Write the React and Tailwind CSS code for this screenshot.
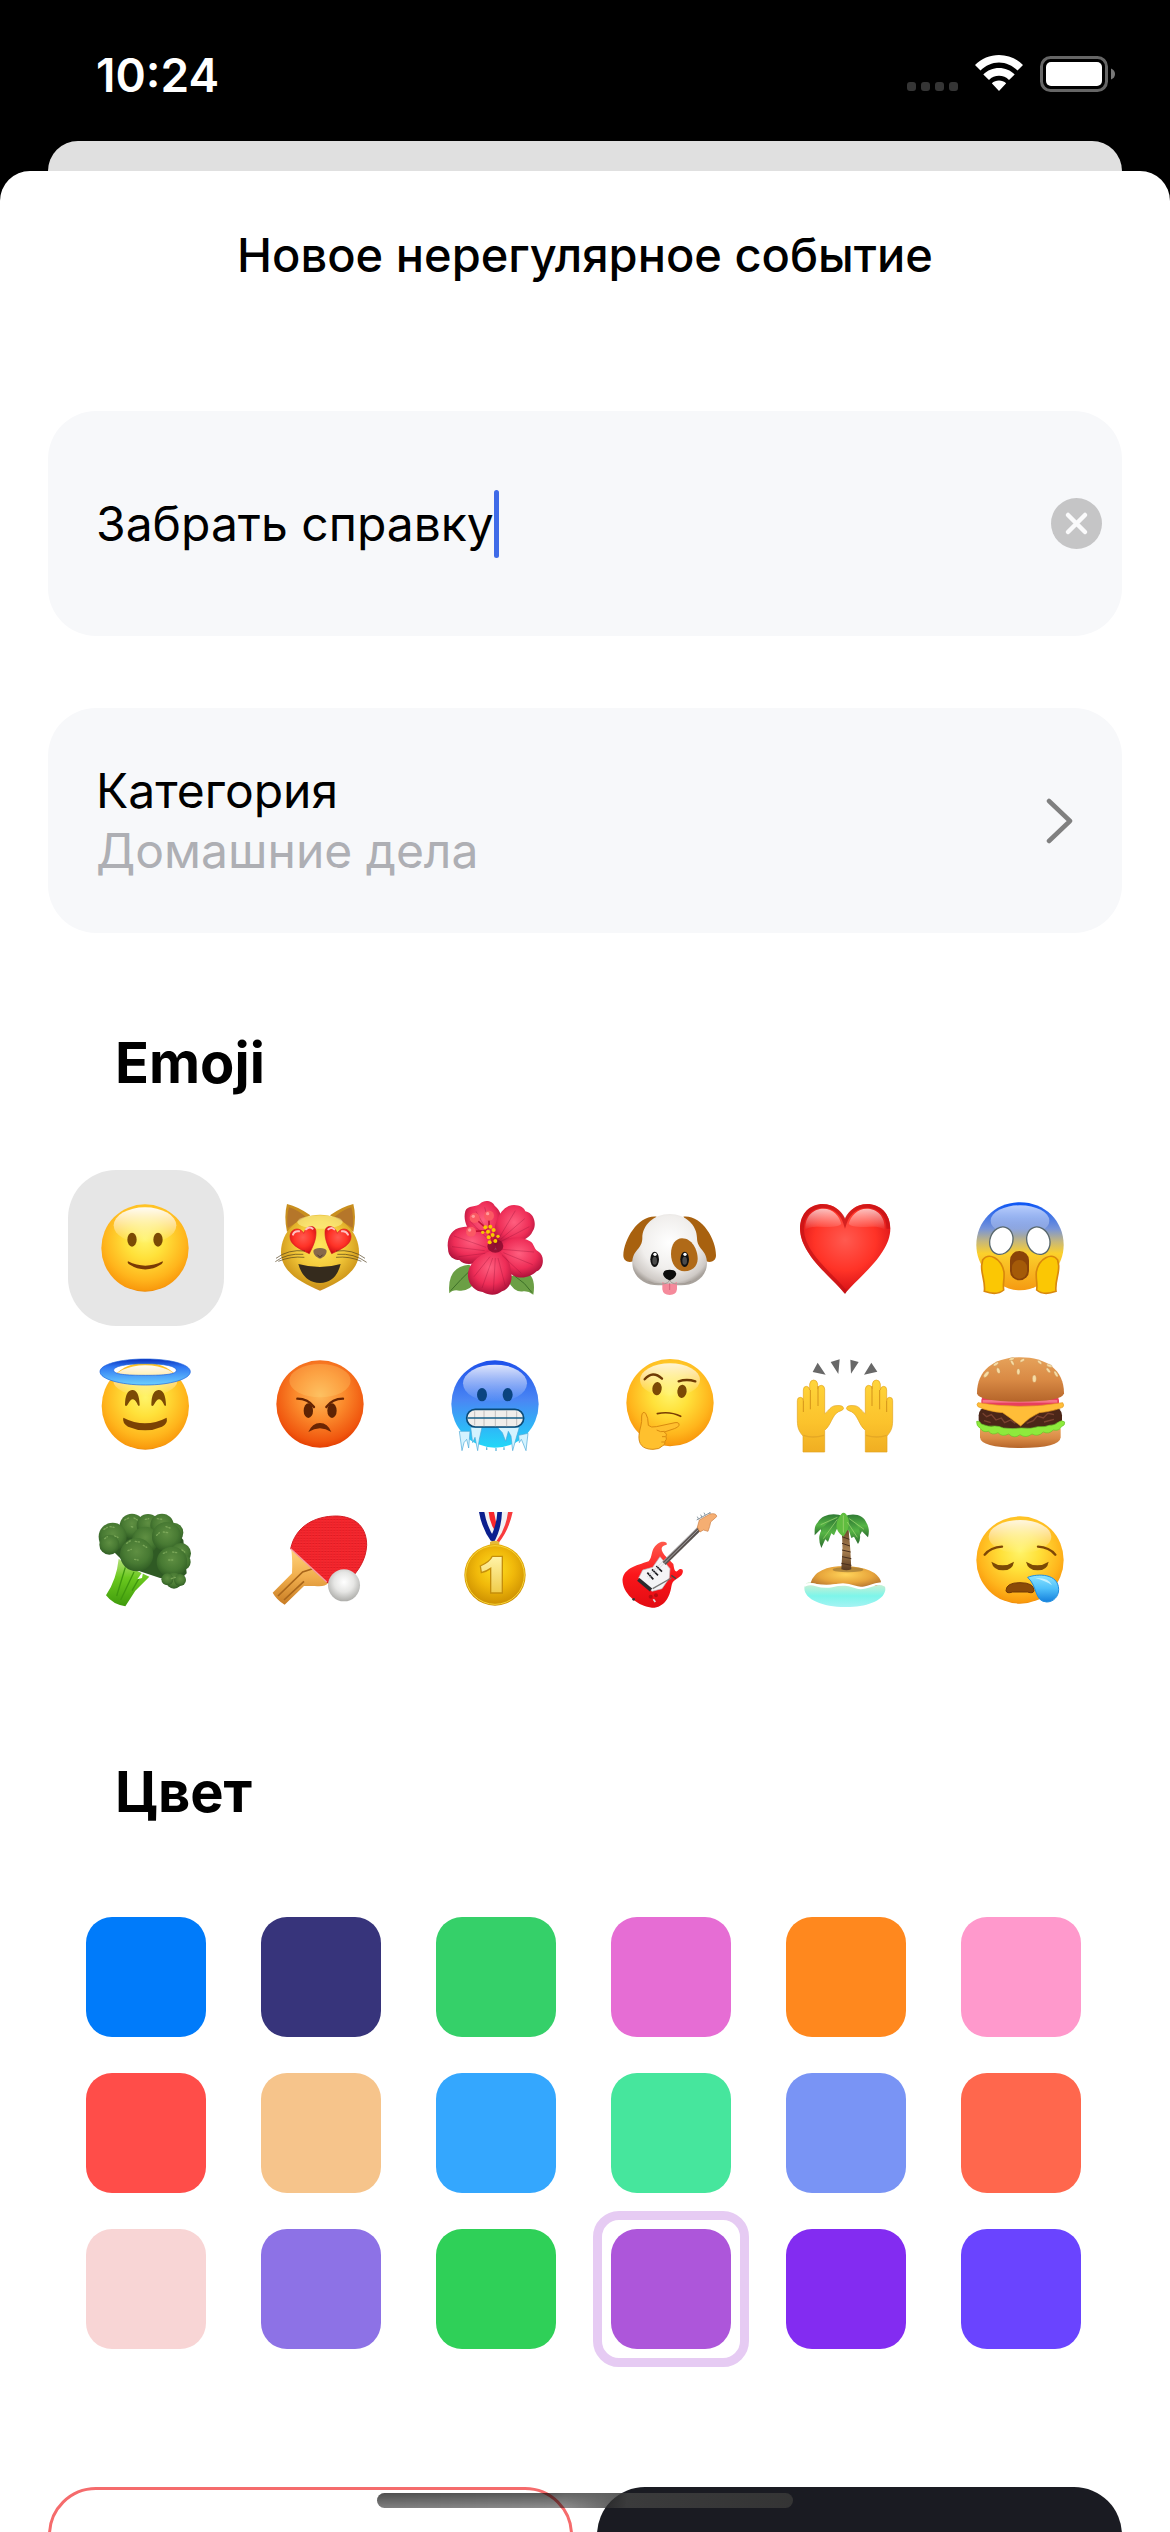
import React, { useState } from "react";

/* Gradients shared by all the emoji drawings. */
function EmojiPaints() {
  const radial = {
    face: [["0", "#fff46a"], ["0.35", "#ffe13a"], ["0.75", "#ffb51c"], ["0.94", "#f99a0d"], ["1", "#d97706"]],
    angry: [["0", "#fdb95a"], ["0.45", "#fb8a2c"], ["0.85", "#f0560e"], ["1", "#e23a00"]],
    cat: [["0", "#ffe75c"], ["0.5", "#f3c93a"], ["0.85", "#d19a1c"], ["1", "#c98a2a"]],
    heart: [["0", "#ff5a50"], ["0.55", "#ff3327"], ["0.85", "#e0191a"], ["1", "#b00a0e"]],
    dog: [["0", "#ffffff"], ["0.6", "#f0eeec"], ["0.9", "#cfcac6"], ["1", "#a8a29c"]],
    ball: [["0", "#ffffff"], ["0.5", "#e6e6e4"], ["1", "#a9a9a6"]],
    petal: [["0", "#ff5f7f"], ["0.6", "#ee2d57"], ["1", "#a80f38"]],
    leaf: [["0", "#5f8f42"], ["0.6", "#487a33"], ["1", "#2f5c23"]],
    gold: [["0", "#ffdf20"], ["0.5", "#f0b80a"], ["1", "#c88a00"]],
    sand: [["0", "#ffd45a"], ["0.6", "#e8a63c"], ["1", "#b87830"]],
  };
  const linear = {
    gloss: [["0", "#ffffff", 0.95], ["1", "#ffffff", 0]],
    halo: [["0", "#0a2fb8"], ["0.3", "#2f77f2"], ["1", "#6cd0ff"]],
    cold: [["0", "#1d50ea"], ["0.45", "#4a86f4"], ["0.75", "#2fb4f7"], ["1", "#22d8f8"]],
    scream: [["0", "#0a54f5"], ["0.3", "#7794d8"], ["0.45", "#c8b878"], ["0.58", "#fbd02c"], ["1", "#f59a12"]],
    hand: [["0", "#ffd53a"], ["0.6", "#fbc22c"], ["1", "#f0ae22"]],
    bun: [["0", "#e6a25a"], ["0.5", "#d98a45"], ["1", "#b5652a"]],
    drop: [["0", "#8ce4ff"], ["0.5", "#4fc0fa"], ["1", "#1580dc"]],
    stalk: [["0", "#b5e07a"], ["0.4", "#6ac81e"], ["1", "#3f9a0c"]],
    sea: [["0", "#d8efcf"], ["0.55", "#7df5ea"], ["1", "#a5f3f3"]],
    trunk: [["0", "#6e4a2c"], ["0.5", "#a98050"], ["1", "#5a3a20"]],
    wood: [["0", "#ffd27a"], ["0.5", "#f0ad4c"], ["1", "#c87c24"]],
    frond: [["0", "#2f7a34"], ["0.5", "#56b545"], ["1", "#2b6b2e"]],
    one: [["0", "#fff3a8"], ["1", "#f0cc4a"]],
    guitar: [["0", "#ff5a4c"], ["0.5", "#fb161b"], ["1", "#e20c12"]],
  };
  return (
    <svg className="absolute size-0" aria-hidden="true">
      <defs>
        {Object.entries(radial).map(([id, stops]) => (
          <radialGradient key={id} id={id} cx="0.5" cy="0.4" r="0.62">
            {stops.map(([o, c]) => <stop key={o} offset={o} stopColor={c} />)}
          </radialGradient>
        ))}
        {Object.entries(linear).map(([id, stops]) => (
          <linearGradient key={id} id={id} x1="0" y1="0" x2="0" y2="1">
            {stops.map(([o, c, a = 1]) => <stop key={o} offset={o} stopColor={c} stopOpacity={a} />)}
          </linearGradient>
        ))}
        <pattern id="mesh" width="9" height="8" patternUnits="userSpaceOnUse">
          <rect width="9" height="8" fill="#f4232a" />
          <path d="M1 6h6" stroke="#c9131b" strokeWidth="2" />
          <path d="M1 3h6" stroke="#ff5256" strokeWidth="1" />
        </pattern>
      </defs>
    </svg>
  );
}

const brown = "#7b4a05";

const emojis = [
  {
    name: "Улыбка", box: "108 114 300 300", art: (
      <>
        <circle cx="255" cy="264" r="131" fill="url(#face)" />
        <ellipse cx="255" cy="196" rx="94" ry="54" fill="url(#gloss)" />
        <ellipse cx="216" cy="239" rx="14" ry="21" fill={brown} />
        <ellipse cx="294" cy="239" rx="14" ry="21" fill={brown} />
        <path d="M204 304q52 26 104 0q2 4-4 9q-48 31-97 0q-6-5-3-9z" fill="#7a3a05" />
      </>
    ),
  },
  {
    name: "Влюблённый кот", box: "633 114 300 300", art: (
      <>
        <path d="M681 132q34 8 70 34l-70 50q-10-46 0-84zM880 132q-34 8-70 34l70 50q10-46 0-84z" fill="#c98f1e" />
        <path d="M687 142q26 8 50 28l-54 34q-4-34 4-62zM874 142q-26 8-50 28l54 34q4-34-4-62z" fill="#b5762a" />
        <path d="M780 164c66 0 117 52 117 112c0 60-60 92-117 116c-57-24-117-56-117-116c0-60 51-112 117-112z" fill="url(#cat)" />
        <ellipse cx="780" cy="186" rx="68" ry="20" fill="#fff799" opacity=".55" />
        <g fill="url(#heart)" stroke="#d81a20" strokeWidth="2">
          <path d="M748 281c-34-16-58-28-58-51c0-24 29-32 41-10c8-26 38-28 37-2c0 24-10 42-20 63z" />
          <path d="M815 281c34-16 58-28 58-51c0-24-29-32-41-10c-8-26-38-28-37-2c0 24 10 42 20 63z" />
        </g>
        <path d="M699 224q4-12 18-10M738 208q10-10 20-2M805 208q10-8 18 0M846 214q12-2 18 10" fill="none" stroke="#ffc1c1" strokeWidth="6" strokeLinecap="round" />
        <path d="M760 272q4-8 20-8t20 8q0 14-14 21q-6 5-12 0q-14-7-14-21z" fill="#87694b" />
        <path d="M772 284l8 8l8-8" fill="none" stroke="#4f3a28" strokeWidth="3" />
        <path d="M715 312q66 18 127 0q-14 56-62 57q-50-2-65-57z" fill="#352b1d" />
        <path d="M735 273q-50-6-87 22M730 283q-50-4-84 22M733 292q-40-4-78 12M828 273q50-6 87 22M832 283q50-4 88 24M828 292q40-4 76 12" fill="none" stroke="#4d3c1a" strokeWidth="2" />
      </>
    ),
  },
  {
    name: "Гибискус", box: "108 114 300 300", art: (
      <>
        <path d="M118 400q-8-80 60-86l30 40q-30 42-60 38q-20-4-30 8z" fill="#6b9f45" />
        <path d="M370 404q10-60-30-70l-50 20q20 46 50 40q14-2 30 10z" fill="#6b9f45" />
        <path d="M122 392q30-34 62-64M366 398q-20-30-52-50" stroke="#3e6f28" strokeWidth="3" fill="none" />
        <path d="M252 265c-60-20-98-70-86-112c4-18 36-12 44-22c14-14 38-8 44 6c28 24 22 50 10 90z" fill="url(#petal)" />
        <path d="M250 250c0-56 14-96 46-112c22-8 46 2 50 16c30 6 34 44 22 60c-12 30-62 40-108 50z" fill="url(#petal)" />
        <path d="M256 256c30-30 80-28 104-12c14 8 10 22 24 30c22 12 18 52-4 60c-14 14-40 24-62 16c-34-14-52-50-62-94z" fill="url(#petal)" />
        <path d="M258 262c-26-54-70-72-112-58c-26 8-36 36-32 62c0 24 18 34 34 34c20 24 74 12 110-38z" fill="url(#petal)" />
        <path d="M256 268c-50 14-86 46-82 82c2 26 24 44 44 46c24 14 46 8 58-2c26-8 34-40 26-66c-2-28-18-46-46-60z" fill="url(#petal)" />
        <g stroke="#8e0d33" strokeWidth="2" opacity=".45" fill="none">
          <path d="M244 236l-46-82M248 230l-24-88M236 240l-56-56M266 236l50-84M272 238l72-62M270 246l88-46M276 268l96 8M280 278l88 36M276 286l58 54M228 262l-96-34M224 272l-98-12M226 280l-80 10M240 290l-48 60M248 294l-32 90M256 294l-6 100M264 294l22 84" />
        </g>
        <ellipse cx="256" cy="258" rx="24" ry="20" fill="#830a2c" opacity=".8" />
        <path d="M250 246l-16-32M236 212l-68 3M232 208l-38-34M237 208v-40" stroke="#c41335" strokeWidth="5" fill="none" />
        <g fill="#fb5963"><circle cx="194" cy="174" r="15" /><circle cx="237" cy="167" r="15" /><circle cx="183" cy="215" r="15" /></g>
        <g fill="#ff9b9b"><circle cx="190" cy="169" r="5" /><circle cx="233" cy="161" r="5" /><circle cx="179" cy="210" r="5" /></g>
        <g fill="#f8c800"><circle cx="226" cy="202" r="6" /><circle cx="241" cy="200" r="6" /><circle cx="218" cy="217" r="5" /><circle cx="234" cy="215" r="6" /><circle cx="251" cy="210" r="6" /><circle cx="248" cy="225" r="6" /><circle cx="236" cy="232" r="6" /><circle cx="264" cy="229" r="5" /><circle cx="256" cy="243" r="6" /><circle cx="239" cy="247" r="6" /></g>
      </>
    ),
  },
  {
    name: "Собака", box: "633 114 300 300", art: (
      <>
        <path d="M740 170c-54-6-98 66-100 116c0 24 28 24 36 12c22-30 24-66 64-128z" fill="#a8610f" />
        <path d="M820 170c54-6 98 66 98 116c0 24-28 24-36 12c-22-30-22-66-62-128z" fill="#a8610f" />
        <path d="M779 162c48 0 82 34 82 72c0 34 30 36 30 74c0 46-42 70-82 68h-60c-40 2-82-22-82-68c0-38 30-40 30-74c0-38 34-72 82-72z" fill="url(#dog)" />
        <path d="M816 235c30 0 47 34 47 62c0 24-20 37-40 37c-22 0-40-22-40-52c0-28 14-47 33-47z" fill="#b06a18" />
        <ellipse cx="734" cy="298" rx="13" ry="23" fill="#111" /><ellipse cx="824" cy="298" rx="13" ry="23" fill="#111" />
        <ellipse cx="734" cy="302" rx="7" ry="12" fill="#4b4b4b" /><ellipse cx="824" cy="302" rx="7" ry="12" fill="#4b4b4b" />
        <circle cx="735" cy="283" r="5" fill="#fff" /><circle cx="825" cy="283" r="5" fill="#fff" />
        <path d="M757 366q22 12 44 0v22q-2 17-22 17t-22-17z" fill="#f58a9b" />
        <path d="M779 370v20" stroke="#d4667c" strokeWidth="3" />
        <path d="M779 358q-2 14-24 14q-22 2-40-8M779 358q2 14 24 14q22 2 40-8" fill="none" stroke="#a39c96" strokeWidth="3" />
        <path d="M759 341q2-12 20-12t20 12q-2 12-16 18q-4 3-8 0q-14-6-16-18z" fill="#0c0c0c" />
      </>
    ),
  },
  {
    name: "Сердце", box: "108 114 300 300", art: (
      <>
        <path d="M255 402C226 360 120 286 120 206C120 160 150 132 188 132C222 132 244 152 255 178C266 152 288 132 322 132C360 132 391 160 391 206C391 286 284 360 255 402z" fill="url(#heart)" stroke="none" />
        <path d="M255 394C226 354 126 284 126 206C126 164 154 138 188 138C222 138 246 160 255 188C264 160 288 138 322 138C358 138 385 164 385 206" fill="none" stroke="#c51216" strokeWidth="11" opacity=".7" />
        <path d="M136 210c-2-44 26-64 54-64c30 0 48 22 54 46c-20 20-88-4-108 18z" fill="url(#gloss)" opacity=".75" />
        <path d="M374 210c2-44-24-64-54-64c-28 0-48 22-54 46c20 20 88-4 108 18z" fill="url(#gloss)" opacity=".75" />
      </>
    ),
  },
  {
    name: "Крик", box: "633 114 300 300", art: (
      <>
        <path d="M780 127c74 0 131 56 131 128c0 76-70 136-131 136s-131-60-131-136c0-72 57-128 131-128z" fill="url(#scream)" />
        <ellipse cx="780" cy="182" rx="88" ry="46" fill="url(#gloss)" opacity=".75" />
        <ellipse cx="724" cy="242" rx="34" ry="42" fill="#fff" stroke="#59686d" strokeWidth="4" transform="rotate(20 724 242)" />
        <ellipse cx="835" cy="242" rx="34" ry="42" fill="#fff" stroke="#59686d" strokeWidth="4" transform="rotate(-20 835 242)" />
        <rect x="750" y="273" width="57" height="88" rx="28" fill="#8a4308" /><rect x="756" y="300" width="45" height="56" rx="22" fill="#a45a08" />
        <g fill="#fbc704" stroke="#d9880c" strokeWidth="5">
          <path d="M668 300c18-24 56-6 64 36c2 22-4 34-1 54q-20 18-58 4c4-30-10-50-8-78z" />
          <path d="M893 300c-18-24-56-6-64 36c-2 22 4 34 1 54q20 18 58 4c-4-30 10-50 8-78z" />
        </g>
      </>
    ),
  },
  {
    name: "Ангел", box: "108 582 300 300", art: (
      <>
        <circle cx="256" cy="738" r="131" fill="url(#face)" />
        <ellipse cx="256" cy="662" rx="96" ry="46" fill="url(#gloss)" />
        <path fillRule="evenodd" d="M256 597c76 0 135 16 135 38s-59 40-135 40s-136-18-136-40s60-38 136-38zM256 611c-58 0-95 8-95 20s37 15 95 15s93-3 93-15s-35-20-93-20z" fill="url(#halo)" stroke="#1e62dd" strokeWidth="2" />
        <path d="M195 736q0-44 21-46t23 46q-4 6-8-6q-13-26-27 2q-5 10-9 4zM274 736q0-44 21-46t23 46q-4 6-8-6q-13-26-27 2q-5 10-9 4z" fill={brown} />
        <path d="M190 773q65 34 130 0q4 18-14 27q-50 22-102 0q-18-12-14-27z" fill="#7b4204" />
      </>
    ),
  },
  {
    name: "Злость", box: "633 582 300 300", art: (
      <>
        <circle cx="780" cy="732" r="131" fill="url(#angry)" />
        <ellipse cx="780" cy="662" rx="92" ry="50" fill="#ffd573" opacity=".3" />
        <ellipse cx="745" cy="752" rx="14" ry="22" fill="#5e2303" /><ellipse cx="816" cy="752" rx="14" ry="22" fill="#5e2303" />
        <path d="M712 716q32 0 50 25M849 716q-32 0-50 25" fill="none" stroke="#662403" strokeWidth="7" strokeLinecap="round" />
        <path d="M745 816q12-27 35-27t34 27q-34-22-69 0z" fill="#6b2503" />
      </>
    ),
  },
  {
    name: "Холод", box: "108 582 300 300", art: (
      <>
        <circle cx="255" cy="732" r="131" fill="url(#cold)" />
        <ellipse cx="255" cy="670" rx="96" ry="56" fill="url(#gloss)" opacity=".9" />
        <ellipse cx="216" cy="704" rx="15" ry="20" fill="#0a4480" /><ellipse cx="293" cy="704" rx="15" ry="20" fill="#0a4480" />
        <path d="M148 814h32l-4 50l-6-26l-8 10l-6 24zM182 802h34l-8 36l-5 34l-8-40l-7 16zM262 802h66l-10 34l-10 36l-5-44l-8-14l-8 30l-10-26zM326 826l28-6l-6 52l-8-20l-6-14l-6 10z" fill="#d3f3ff" stroke="#4aa8d8" strokeWidth="2" />
        <path d="M230 862v8M258 864v9M282 862v8" stroke="#64b8dc" strokeWidth="4" />
        <rect x="170" y="748" width="171" height="53" rx="26" fill="#f0eeeb" stroke="#0b4b77" strokeWidth="5" />
        <path d="M222 751v48M256 751v48M290 751v48M194 754v42M320 754v42" stroke="#a9a7a8" strokeWidth="2" /><path d="M172 774h167" stroke="#17618a" strokeWidth="4" />
      </>
    ),
  },
  {
    name: "Раздумье", box: "633 582 300 300", art: (
      <>
        <circle cx="780" cy="728" r="131" fill="url(#face)" />
        <ellipse cx="780" cy="660" rx="90" ry="50" fill="url(#gloss)" opacity=".85" />
        <ellipse cx="741" cy="686" rx="14" ry="20" fill={brown} transform="rotate(6 741 686)" /><ellipse cx="816" cy="694" rx="14" ry="20" fill={brown} transform="rotate(6 816 694)" />
        <path d="M704 658q24-28 52-2M806 664q24-8 50 0" fill="none" stroke="#6f3a04" strokeWidth="7" strokeLinecap="round" />
        <path d="M742 761q38-8 70 8" fill="none" stroke="#7a3d04" strokeWidth="5" strokeLinecap="round" />
        <path d="M695 768q2-16 12-8q8 12 8 36q8 8 24 4l56-12q14-2 12 8q-2 6-14 10l-30 10q10 6 5 14q4 8-3 14q2 10-8 14q-8 10-28 10c-32 0-44-16-42-42c2-22 10-34 8-58z" fill="#ffc02e" stroke="#d98a10" strokeWidth="3" />
        <path d="M740 810q12 8 24 4M756 830h11M754 846h10" stroke="#d98a10" strokeWidth="3" fill="none" />
      </>
    ),
  },
  {
    name: "Руки вверх", box: "108 582 300 300", art: (
      <>
        <g fill="#686868"><path d="M173 608l24 36l-39-8zM212 606l27-8l-4 44zM271 599l25 7l-23 35zM334 608l18 27l-40 9z" /></g>
        {["", "matrix(-1 0 0 1 510 0)"].map((t) => (
          <g key={t} transform={t || undefined}>
            <path d="M129 876v-48c-16-18-17-30-17-54v-52q0-10 9-10t9 10v-32q0-11 9-11t10 11v-18q2-12 12-12t12 12v14q2-10 11-10t10 11v74c12-8 18-24 34-24q20-2 22 6q4 6-14 12c-20 10-22 40-42 56v65z" fill="url(#hand)" stroke="#e3a51e" strokeWidth="2" />
            <path d="M130 722v34M151 690v58M174 678v60" stroke="#d4931a" strokeWidth="3" />
            <path d="M130 826q28 10 62 0" stroke="#e5a825" strokeWidth="4" fill="none" />
          </g>
        ))}
      </>
    ),
  },
  {
    name: "Бургер", box: "633 582 300 300", art: (
      <>
        <path d="M660 806h242v26q-2 32-121 32t-121-32z" fill="url(#bun)" />
        <rect x="656" y="740" width="250" height="66" rx="26" fill="#4b2618" />
        <path d="M668 760l12 10l14-6l14 16l16-6l10 14l18-8l14 10M800 790l20-8l12-14l18 6l14-14l18 4M672 782l20 6M852 786l30-8" stroke="#7a4230" strokeWidth="4" fill="none" />
        <path d="M650 784q8-4 14 8q22 10 40 6q14 0 26 6q28 4 54 0q28 4 50-4q20 2 34-4q16 0 24-8q14-10 22-2q2 10-10 14q-6 14-24 10q-14 14-30 6q-16 16-34 6q-18 14-36 2q-18 14-34-2q-20 10-32-4q-18 10-28-4q-18 4-24-8q-14-8-12-22z" fill="#8eea3c" stroke="#65c228" strokeWidth="2" />
        <rect x="664" y="708" width="233" height="34" rx="14" fill="#e83f5c" /><rect x="668" y="720" width="224" height="8" fill="#ff9aa6" opacity=".6" />
        <path d="M654 728q126 22 254 0q6 8 0 14q-28 12-70 16q-32 14-56 40q-30-24-54-40q-46-4-74-18q-6-6 0-12z" fill="#ffbd38" stroke="#e59a1e" strokeWidth="2" />
        <path d="M651 700c0-70 52-108 130-108s131 38 131 108q-4 25-131 25t-130-25z" fill="url(#bun)" />
        <g fill="#f7dca4" stroke="#c08a50" strokeWidth="1"><ellipse cx="679" cy="643" rx="5" ry="11" transform="rotate(40 679 643)" /><ellipse cx="715" cy="632" rx="5" ry="9" transform="rotate(-20 715 632)" /><ellipse cx="708" cy="612" rx="4" ry="9" transform="rotate(60 708 612)" /><ellipse cx="757" cy="608" rx="4" ry="9" transform="rotate(-30 757 608)" /><ellipse cx="755" cy="597" rx="4" ry="8" transform="rotate(80 755 597)" /><ellipse cx="775" cy="635" rx="5" ry="9" /><ellipse cx="787" cy="601" rx="4" ry="8" transform="rotate(60 787 601)" /><ellipse cx="823" cy="656" rx="6" ry="11" /><ellipse cx="839" cy="607" rx="4" ry="8" transform="rotate(-50 839 607)" /><ellipse cx="865" cy="631" rx="4" ry="9" transform="rotate(-40 865 631)" /><ellipse cx="868" cy="617" rx="4" ry="9" transform="rotate(-70 868 617)" /><ellipse cx="888" cy="642" rx="4" ry="10" transform="rotate(-30 888 642)" /></g>
      </>
    ),
  },
  {
    name: "Брокколи", box: "108 1050 300 300", art: (
      <>
        <path d="M176 1196l42 30l50 24l-42 42l-30 47q-38-6-58-33q32-48 38-110z" fill="url(#stalk)" />
        <path d="M196 1222l-26 86M222 1236l-40 84M240 1250l-24 42" stroke="#3f980e" strokeWidth="4" fill="none" /><path d="M232 1258l18-26l-4 22z" fill="#fff" />
        <path d="M150 1110l60-30l110 0l50 60l10 100l-20 20l-60-6l-90-30l-60-60z" fill="#2f5a24" />
        <g fill="url(#leaf)"><circle cx="216" cy="1098" r="37" /><circle cx="264" cy="1096" r="34" /><circle cx="306" cy="1096" r="35" /><circle cx="158" cy="1130" r="42" /><circle cx="148" cy="1154" r="30" /><circle cx="340" cy="1118" r="30" /><circle cx="256" cy="1140" r="40" /><circle cx="320" cy="1130" r="44" /><circle cx="362" cy="1180" r="31" /><circle cx="368" cy="1206" r="24" /><circle cx="336" cy="1206" r="46" /><circle cx="342" cy="1262" r="24" /><circle cx="360" cy="1260" r="18" /><circle cx="322" cy="1258" r="18" /><circle cx="230" cy="1184" r="50" /></g>
        <path d="M132 1108l10-6M150 1100l12 2M194 1080l12-6M222 1074l10 6M256 1078l10-2M292 1076l14 2M318 1100l12 4M200 1150l12-8M226 1144l12 2M250 1156l10 6M204 1172l10-4M310 1116l14 2M290 1126l8-8M310 1180l10-4M338 1176l12 2M326 1200l12 0M134 1136l8-6M164 1128l10 4M214 1100l8 2M366 1170l8 6M334 1256l12-4M224 1198l10 2" stroke="#8bb565" strokeWidth="4" strokeLinecap="round" strokeDasharray="4 5" opacity=".7" />
      </>
    ),
  },
  {
    name: "Пинг-понг", box: "633 1050 300 300", art: (
      <>
        <path d="M694 1170l110 100q-10 12-40 8l-32 0l-58 56q-24-14-36-36l58-58q2-40-2-70z" fill="url(#wood)" />
        <path d="M654 1308l74-72l30-10M672 1320l60-56" stroke="#a9661b" strokeWidth="5" fill="none" />
        <path d="M692 1166C706 1100 762 1068 830 1068C890 1070 920 1104 920 1156C918 1200 894 1234 868 1260C846 1276 816 1278 800 1266z" fill="url(#mesh)" stroke="#d41c22" strokeWidth="3" />
        <path d="M692 1166l108 100" stroke="#f7a0a0" strokeWidth="4" />
        <circle cx="852" cy="1276" r="48" fill="url(#ball)" />
      </>
    ),
  },
  {
    name: "Медаль", box: "108 1050 300 300", art: (
      <>
        <path d="M207 1056h54q-4 50 8 90h-24q-26-40-38-90z" fill="#f2f2f4" /><path d="M207 1056h16q8 46 32 80l-8 14q-32-44-40-94z" fill="#0b1f8e" /><path d="M236 1056h16l8 40l-8 12q-14-24-16-52z" fill="#f8262c" />
        <path d="M262 1056h46q-12 54-42 92h-24q18-40 20-92z" fill="#f2f2f4" /><path d="M262 1056h14q-2 54-26 94l-10-14q20-40 22-80z" fill="#0b1f8e" /><path d="M294 1056h14q-12 56-42 92l-6-6q28-36 34-86z" fill="#f93b3d" />
        <path d="M240 1146q15-8 28 0v16h-28z" fill="#e6b93a" />
        <circle cx="255" cy="1245" r="92" fill="url(#gold)" /><circle cx="255" cy="1245" r="88" fill="none" stroke="#f7d43a" strokeWidth="3" />
        <path d="M211 1218q28-12 36-29h30v110h-35v-74q-14 10-28 13z" fill="url(#one)" stroke="#c58e0b" strokeWidth="4" />
      </>
    ),
  },
  {
    name: "Гитара", box: "633 1050 300 300", art: (
      <>
        <path d="M716 1204c14-16 4-34 26-52c14-12 32-6 28 2c-24 4-14 20-6 32l26 26c4 26 8 26 18 16c12-4 14 8 6 18c-14 14-26 12-30 34c-4 30-22 64-58 63c-38-2-84-38-88-76c-4-40 40-50 78-63z" fill="url(#guitar)" />
        <path d="M750 1190l30 36l-2 28l-22 32l-30 8l-40-40l12-24l30-8z" fill="#f4f4f6" stroke="#b9bac0" strokeWidth="2" />
        <path d="M712 1238l18 20M726 1228l18 18M739 1218l17 17" stroke="#1c1c20" strokeWidth="5" />
        <path d="M685 1258l38 32" stroke="#2b2b2e" strokeWidth="11" /><path d="M728 1286l56-32" stroke="#777" strokeWidth="4" />
        <path d="M762 1210l108-106" stroke="#5a5350" strokeWidth="14" /><path d="M716 1256l156-154M712 1250l154-150" stroke="#c9c9ce" strokeWidth="2" />
        <path d="M862 1102l6-22l32-18q20-4 20 8l-18 16q-2 12-8 28l-14-4l-10 6z" fill="#f5ae72" stroke="#c87d45" strokeWidth="2" />
        <path d="M860 1080l40-22M866 1078l-4-8M876 1072l-4-8M886 1066l-4-8M900 1062v-6" stroke="#8a97a0" strokeWidth="3" />
        <circle cx="722" cy="1310" r="6" fill="#b80d10" /><circle cx="738" cy="1306" r="6" fill="#b80d10" /><circle cx="671" cy="1318" r="4" fill="#333" /><path d="M784 1246l14 10" stroke="#444" strokeWidth="4" /><path d="M730 1318l6 8" stroke="#ddd" strokeWidth="5" />
      </>
    ),
  },
  {
    name: "Остров", box: "108 1050 300 300", art: (
      <>
        <path d="M133 1284c2-18 16-20 30-14c40 20 80-6 110 8c36 14 60-16 86-8c14 0 18 10 17 20c-6 36-64 52-121 51c-66 0-122-22-122-57z" fill="url(#sea)" />
        <path d="M152 1268q16-50 104-50q92 4 107 46q-2 14-26 14q-24 6-46 4q-30-12-60-10q-44 6-79-4z" fill="url(#sand)" />
        <path d="M136 1276c26-14 36 12 80 2c50-12 60 4 86 6c30 0 50-22 72-8" stroke="#fff" strokeWidth="7" fill="none" strokeLinecap="round" />
        <ellipse cx="264" cy="1229" rx="46" ry="8" fill="#8d6a32" opacity=".6" />
        <path d="M246 1110h20q6 60 8 118q-14 6-30 0q6-60 2-118z" fill="url(#trunk)" />
        <path d="M246 1130l22 8M246 1150l24 8M246 1170l26 6M246 1190l28 6M244 1210l30 6" stroke="#4a2f1c" strokeWidth="3" />
        <g fill="url(#frond)"><path d="M250 1070c-26-14-64-6-76 16c-12 12-10 24-10 40l18-18l4 12l14-22l6 10l12-20z" /><path d="M248 1074c-32 0-64 22-70 54q-2 20 6 36l12-26l8 8l10-26l8 6q12-28 26-52z" /><path d="M252 1070c26-14 60-6 68 20c8 14 8 26 4 42l-18-18l-6 10l-14-24l-6 10l-12-24z" /><path d="M254 1074c26 8 48 24 46 52q2 14-6 26l-12-22l-8 4l-8-24l-8 2z" /><path d="M244 1062q6-8 14 0c14 20 12 42-8 68c-22-14-30-40-6-68z" fill="#60bd40" /></g>
        <path d="M232 1078l-42 58M268 1076l44 32M250 1066v52M232 1072l-50 22M262 1086l30 46" stroke="#a9da77" strokeWidth="2" fill="none" />
      </>
    ),
  },
  {
    name: "Сонное лицо", box: "633 1050 300 300", art: (
      <>
        <circle cx="780" cy="1200" r="131" fill="url(#face)" />
        <ellipse cx="780" cy="1130" rx="94" ry="50" fill="url(#gloss)" opacity=".9" />
        <path d="M674 1184q18-22 52-24M886 1184q-18-22-52-24" fill="none" stroke="#7f4706" strokeWidth="7" strokeLinecap="round" />
        <path d="M694 1205q34 22 68 0q-4 26-33 26t-35-26zM798 1205q34 22 68 0q-4 26-33 26t-35-26z" fill={brown} />
        <path d="M738 1292q0-24 42-24t42 24q-2 10-20 4h-44q-18 6-20-4z" fill="#8a4a08" stroke="#713805" strokeWidth="3" />
        <path d="M803 1252c30-12 92-12 93 36c0 22-16 38-36 38c-38-2-26-46-57-74z" fill="url(#drop)" stroke="#208ee0" strokeWidth="3" />
        <path d="M826 1254q40-2 50 22q-20-14-50-22z" fill="#d8f7ff" opacity=".8" />
      </>
    ),
  },
];

const colors = [
  "#007bfa", "#37347b", "#35d069", "#e66dd4", "#ff881e", "#ff99cc",
  "#ff4d49", "#f6c48b", "#34a7fe", "#46e69d", "#7994f5", "#ff674d",
  "#f8d5d5", "#8d72e6", "#2fd058", "#ad56da", "#832cf1", "#6a44ff",
];

function StatusBar() {
  return (
    <header className="flex h-[141px] shrink-0 items-start justify-between bg-black pl-24 pr-[54px] pt-[45px] text-white">
      <span className="text-[46px] font-semibold leading-[60px]">10:24</span>
      <svg className="mt-[9px] h-[39px] w-[210px]" viewBox="906 54 210 39" role="img" aria-label="Wi-Fi, батарея заряжена">
        <g fill="#353535">
          {[907, 921, 935, 949].map((x) => <rect key={x} x={x} y="82" width="9" height="9" rx="3" />)}
        </g>
        <path d="M999 55c9 0 17.500 3.500 24 10l-5.500 5.500c-5-5-11.500-8-18.500-8s-13.500 3-18.500 8l-5.500-5.500c6.500-6.500 15-10 24-10zM999 68c6 0 11.500 2.300 15.700 6.400l-5.700 5.500c-2.700-2.600-6.200-4.100-10-4.100s-7.300 1.500-10 4.100l-5.700-5.500c4.200-4.100 9.700-6.400 15.700-6.400zM999 80.500c2.700 0 5.200 1 7.200 2.800l-7.200 7.700l-7.200-7.700c2-1.800 4.500-2.800 7.200-2.800z" fill="#fff" />
        <rect x="1041.500" y="57.500" width="65" height="33" rx="9" fill="none" stroke="#666" strokeWidth="3" />
        <rect x="1046" y="62" width="56" height="24" rx="5" fill="#fff" />
        <path d="M1111 68.500q4 1.500 4 5.500t-4 5.500z" fill="#777" />
      </svg>
    </header>
  );
}

export default function App() {
  const [title, setTitle] = useState("Забрать справку");
  const [emoji, setEmoji] = useState(0);
  const [color, setColor] = useState(15);

  return (
    <div className="relative flex h-screen flex-col overflow-hidden bg-black font-['Inter','Liberation_Sans',sans-serif] text-black">
      <EmojiPaints />
      <StatusBar />
      <div className="mx-12 h-[60px] shrink-0 rounded-t-[30px] bg-[#e0e0e0]" />
      <main className="relative -mt-[30px] shrink-0 rounded-t-[30px] bg-white pb-12 pt-[54px]">
        <h1 className="text-center text-[47px] font-medium leading-[60px]">Новое нерегулярное событие</h1>

        <div className="mx-12 mt-[126px] flex h-[225px] items-center rounded-[48px] bg-[#f7f8fa] pl-12 pr-5">
          <input
            aria-label="Название события"
            className="min-w-0 bg-transparent text-[48px] leading-[60px] outline-none [field-sizing:content]"
            value={title}
            onChange={(e) => setTitle(e.target.value)}
          />
          <span className="h-[68px] w-[5px] shrink-0 rounded-full bg-[#3f6be8]" />
          <button type="button" aria-label="Очистить" onClick={() => setTitle("")} className="ml-auto shrink-0">
            <svg className="size-[51px]" viewBox="0 0 51 51">
              <circle cx="25.500" cy="25.500" r="25.500" fill="#c5c5c6" />
              <path d="M17 17l17 17M34 17l-17 17" stroke="#fafafb" strokeWidth="4.500" strokeLinecap="round" />
            </svg>
          </button>
        </div>

        <div className="mx-12 mt-[72px]">
          <button type="button" className="flex h-[225px] w-full items-center justify-between rounded-[48px] bg-[#f7f8fa] pl-12 pr-12 text-left text-[48px] leading-[60px]">
            <span className="flex flex-col">
              <span>Категория</span>
              <span className="text-[#aeafb4]">Домашние дела</span>
            </span>
            <svg className="h-[46px] w-[30px]" viewBox="0 0 30 46" fill="none" stroke="#808080" strokeWidth="4.500" strokeLinecap="round" strokeLinejoin="round">
              <path d="M5 3l21 20L5 43" />
            </svg>
          </button>
        </div>

        <section>
          <h2 className="mt-[100px] px-[115px] text-[56px] font-bold leading-[60px]">Emoji</h2>
          <div className="mt-[77px] grid grid-cols-6 gap-x-[19px] pl-[68px] pr-[71px]">
            {emojis.map((item, i) => (
              <button
                key={item.name}
                type="button"
                aria-label={item.name}
                aria-pressed={emoji === i}
                onClick={() => setEmoji(i)}
                className={`flex aspect-square items-center justify-center rounded-[48px] ${emoji === i ? "bg-[#e6e6e6]" : ""}`}
              >
                <svg className="size-[100px]" viewBox={item.box}>{item.art}</svg>
              </button>
            ))}
          </div>
        </section>

        <section>
          <h2 className="mt-[124px] px-[115px] text-[56px] font-bold leading-[60px]">Цвет</h2>
          <div className="mt-[77px] grid grid-cols-6 gap-x-[19px] pl-[68px] pr-[71px]">
            {colors.map((value, i) => (
              <button
                key={value}
                type="button"
                aria-label={`Цвет ${i + 1}`}
                aria-pressed={color === i}
                onClick={() => setColor(i)}
                className={`aspect-square rounded-[26px] border-[9px] p-[9px] ${color === i ? "border-[#e6cbf3]" : "border-transparent"}`}
              >
                <span className="block size-full rounded-[26px]" style={{ backgroundColor: value }} />
              </button>
            ))}
          </div>
        </section>

        <div className="mx-12 mt-[120px] grid grid-cols-2 gap-6">
          <button type="button" aria-label="Отменить" className="h-[180px] rounded-[48px] border-[3px] border-[#f56b6c]" />
          <button type="button" aria-label="Создать" className="h-[180px] rounded-[48px] bg-[#1a1b22]" />
        </div>
      </main>
      <div className="absolute bottom-6 left-1/2 h-[15px] w-[416px] -translate-x-1/2 overflow-hidden rounded-full bg-[linear-gradient(to_right,#00000080_0%,#00000070_45%,#404040dd_60%,#363636f0_100%)]">
        <div className="h-full w-3/5 bg-[linear-gradient(to_bottom,#00000060,#00000000)] [mask-image:linear-gradient(to_right,black_70%,transparent)]" />
      </div>
    </div>
  );
}
